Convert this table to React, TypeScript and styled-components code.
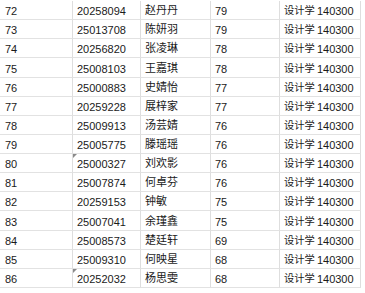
import React from 'react'
import styled, { createGlobalStyle } from 'styled-components'

const GlobalStyle = createGlobalStyle`
  html, body {
    margin: 0;
    padding: 0;
    background-color: #fff;
  }
`

const StyledSheet = styled.div`
  display: grid;
  grid-template-columns: 73px 68px 70px 69px 81px;
  grid-auto-rows: 19.14px;
  padding-top: 1px;
  font-family: "Liberation Sans", Arial, "Noto Sans CJK SC", sans-serif;
  font-size: 11px;
  color: #1a1a1a;
`

const StyledCell = styled.div<{ $flag?: boolean }>`
  position: relative;
  box-sizing: border-box;
  display: flex;
  align-items: flex-end;
  padding: 0 0 2px 4px;
  border-right: 1px solid #dedede;
  border-bottom: 1px solid #e2e2e2;
  white-space: nowrap;
  overflow: hidden;

  &:nth-child(5n + 1) {
    padding-left: 5px;
  }

  ${({ $flag }) => $flag && `
    &::before {
      content: '';
      position: absolute;
      top: 0;
      left: 0;
      border-top: 4px solid #8a8a8a;
      border-right: 4px solid transparent;
    }
  `}
`

const StyledName = styled.span<{ $small?: boolean }>`
  font-family: "Noto Sans CJK SC", sans-serif;
  font-size: ${({ $small }) => ($small ? '10.3px' : '11px')};
  margin-right: ${({ $small }) => ($small ? '2px' : '0')};
`

const rows = [
  ['72', '20258094', '赵丹丹', '79'],
  ['73', '25013708', '陈妍羽', '79'],
  ['74', '20256820', '张凌琳', '78'],
  ['75', '25008103', '王嘉琪', '78'],
  ['76', '25000883', '史婧怡', '77'],
  ['77', '20259228', '展梓家', '77'],
  ['78', '25009913', '汤芸婧', '76'],
  ['79', '25005775', '滕瑶瑶', '76'],
  ['80', '25000327', '刘欢影', '76'],
  ['81', '25007874', '何卓芬', '76'],
  ['82', '20259153', '钟敏', '75'],
  ['83', '25007041', '余瑾鑫', '75'],
  ['84', '25008573', '楚廷轩', '69'],
  ['85', '25009310', '何映星', '68'],
  ['86', '20252032', '杨思雯', '68'],
]

const flagged = ['80', '86']

const App = () => {
  return (
    <>
      <GlobalStyle />
      <StyledSheet>
        {rows.map(([no, id, name, score]) => (
          <React.Fragment key={no}>
            <StyledCell>{no}</StyledCell>
            <StyledCell $flag={flagged.includes(no)}>{id}</StyledCell>
            <StyledCell><StyledName>{name}</StyledName></StyledCell>
            <StyledCell>{score}</StyledCell>
            <StyledCell><StyledName $small>设计学</StyledName>140300</StyledCell>
          </React.Fragment>
        ))}
      </StyledSheet>
    </>
  )
}

export default App
